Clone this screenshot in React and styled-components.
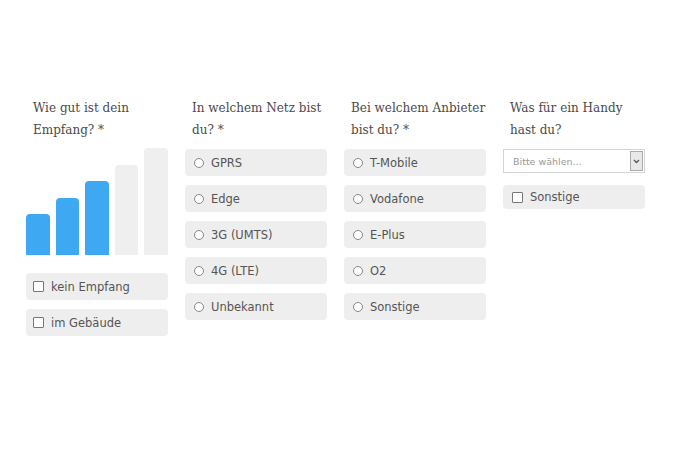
import React from "react";
import styled, { createGlobalStyle } from "styled-components";

const GlobalStyle = createGlobalStyle`
  html, body { margin: 0; padding: 0; background: #fff; }
  body { font-family: "DejaVu Sans", Verdana, sans-serif; }
`;

const Page = styled.div`
  width: 674px;
  height: 449px;
  box-sizing: border-box;
  padding: 97px 0 0 26px;
  display: grid;
  grid-template-columns: repeat(4, 142px);
  column-gap: 17px;
  align-items: start;
`;

const Column = styled.div`
  display: flex;
  flex-direction: column;
`;

const Question = styled.div`
  font-family: "DejaVu Serif", "Liberation Serif", serif;
  font-size: 12px;
  line-height: 22px;
  color: #4a4a4a;
  padding-left: 7px;
  margin-bottom: 8px;
  white-space: nowrap;
`;

const Bars = styled.div`
  display: flex;
  align-items: flex-end;
  gap: 6px;
  height: 107px;
  margin: -1px 0 18px;
`;

const Bar = styled.div`
  width: 23.5px;
  border-radius: 4px 4px 0 0;
  background: ${(p) => (p.$on ? "#3ea8f2" : "#efefef")};
`;

const Options = styled.div`
  display: flex;
  flex-direction: column;
  gap: ${(p) => p.$gap || 9}px;
`;

const Option = styled.label`
  display: flex;
  align-items: center;
  gap: 7px;
  height: ${(p) => p.$h || 27}px;
  padding-left: ${(p) => p.$pl || 9}px;
  background: #eeeeee;
  border-radius: 4px;
  font-size: 11.5px;
  color: #555;
`;

const Radio = styled.span`
  width: 8px;
  height: 8px;
  border: 1px solid #888;
  border-radius: 50%;
  background: #fff;
  flex: none;
`;

const Check = styled.span`
  width: 9px;
  height: 9px;
  border: 1px solid #777;
  border-radius: 1px;
  background: #fff;
  flex: none;
`;

const Select = styled.div`
  display: flex;
  align-items: stretch;
  height: 24px;
  box-sizing: border-box;
  border: 1px solid #d4d4d4;
  background: #fff;
  margin-bottom: 12px;
`;

const SelectText = styled.span`
  flex: 1;
  display: flex;
  align-items: center;
  padding-left: 9px;
  font-size: 9.5px;
  color: #999;
`;

const SelectArrow = styled.span`
  width: 11px;
  margin: 1px;
  border: 1px solid #aaa;
  background: #e8e8e8;
  display: flex;
  align-items: center;
  justify-content: center;
`;

const netze = ["GPRS", "Edge", "3G (UMTS)", "4G (LTE)", "Unbekannt"];
const anbieter = ["T-Mobile", "Vodafone", "E-Plus", "O2", "Sonstige"];
const bars = [41, 57, 74, 90, 107];

export default function App() {
  return (
    <>
      <GlobalStyle />
      <Page>
        <Column>
          <Question>
            Wie gut ist dein
            <br />
            Empfang? *
          </Question>
          <Bars>
            {bars.map((h, i) => (
              <Bar key={i} $on={i < 3} style={{ height: h }} />
            ))}
          </Bars>
          <Options>
            <Option $pl={7}>
              <Check />
              kein Empfang
            </Option>
            <Option $pl={7}>
              <Check />
              im Gebäude
            </Option>
          </Options>
        </Column>
        <Column>
          <Question>
            In welchem Netz bist
            <br />
            du? *
          </Question>
          <Options>
            {netze.map((n) => (
              <Option key={n}>
                <Radio />
                {n}
              </Option>
            ))}
          </Options>
        </Column>
        <Column>
          <Question>
            Bei welchem Anbieter
            <br />
            bist du? *
          </Question>
          <Options>
            {anbieter.map((n) => (
              <Option key={n}>
                <Radio />
                {n}
              </Option>
            ))}
          </Options>
        </Column>
        <Column>
          <Question>
            Was für ein Handy
            <br />
            hast du?
          </Question>
          <Select>
            <SelectText>Bitte wählen...</SelectText>
            <SelectArrow>
              <svg width="7" height="5" viewBox="0 0 7 5">
                <path d="M1 1l2.5 2.5L6 1" fill="none" stroke="#555" strokeWidth="1.3" />
              </svg>
            </SelectArrow>
          </Select>
          <Options>
            <Option $h={24} $pl={9}>
              <Check />
              Sonstige
            </Option>
          </Options>
        </Column>
      </Page>
    </>
  );
}
